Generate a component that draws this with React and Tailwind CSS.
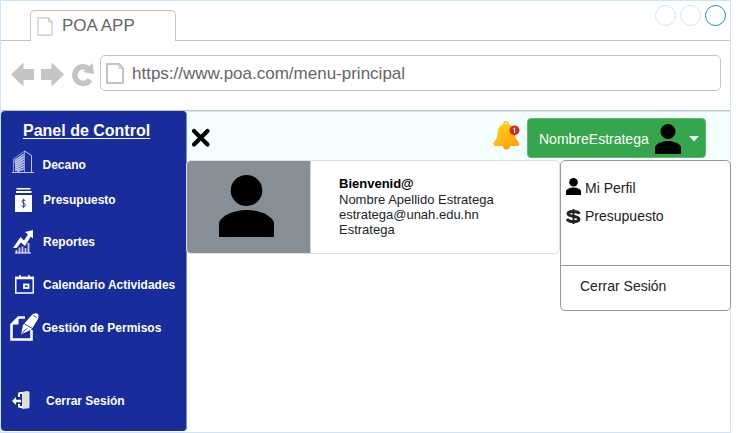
import React from "react";

function PageIcon({ className, weight }) {
  return (
    <svg className={className} viewBox="0 0 18 21" preserveAspectRatio="none" fill="none" stroke="#c4c4c4" strokeWidth={weight}>
      <path d="M1 1H13L17 5.500V20H1Z" />
      <path d="M13 1V5.500H17" strokeWidth="1" />
    </svg>
  );
}

function Person({ className }) {
  return (
    <svg className={className} viewBox="0 0 54 62" preserveAspectRatio="none" fill="#000">
      <circle cx="27" cy="15.500" r="15.500" />
      <path d="M0 62V47.500C3 40 15 35 27 35S51 40 54 47.500V62Z" />
    </svg>
  );
}

function BuildingIcon() {
  return (
    <svg className="h-6 w-[22px]" viewBox="0 0 22 24" fill="none" stroke="#c2c9ec">
      <path d="M0 22.500H22" strokeWidth="1" />
      <path d="M1.500 22V9L12.500 1V22" strokeWidth=".7" />
      <path d="M12.500 1L19.500 5.500V22" strokeWidth="1" />
      <path d="M2.500 10.500L12 4M2.500 12.500L12 6.500M3 14.500L12 9M3 16.500L12 11.500M3 18.500L12 14M3 20.500L12 16.500M5 21.500L12 19" strokeWidth="1.500" />
    </svg>
  );
}

function BudgetIcon() {
  return (
    <svg className="h-6 w-[17px]" viewBox="0 0 17 24" fill="#fff">
      <rect x="1.500" y="0" width="14" height="1.500" />
      <rect x="1" y="3" width="15.500" height="2" />
      <rect y="7" width="17" height="17" />
      <path d="M10.300 13C9.800 11.600 7 11.700 7 13.300C7 15.200 10.300 14.900 10.300 17.200C10.300 19.100 7.200 19.200 6.800 17.500M8.600 10.700V20.200" fill="none" stroke="#182c9c" strokeWidth=".9" />
    </svg>
  );
}

function ReportIcon() {
  return (
    <svg className="h-6 w-5" viewBox="0 0 20 24" fill="#fff">
      <path d="M0 18L7.500 7L11 10.500L15 4.500L12 2L20 0V8.500L17.800 6.500L12 16L8 12.500L3.500 18Z" />
      <path d="M3.500 20V23M6.500 17.500V23M9.500 16.500V23M12.500 18V23M15.500 13V23" stroke="#c7cdec" strokeWidth="1.800" />
      <path d="M2 22.600H18V23.500H2Z" />
    </svg>
  );
}

function CalendarIcon() {
  return (
    <svg className="h-[19px] w-[19px]" viewBox="0 0 19 19" fill="none" stroke="#fff">
      <rect x=".75" y="2.500" width="17.500" height="15.500" strokeWidth="1.500" />
      <path d="M0 3H19" strokeWidth="2.500" />
      <path d="M5 0V3M14 0V3" strokeWidth="1.500" />
      <rect x="9" y="9.500" width="4.500" height="3.500" strokeWidth="1.800" />
    </svg>
  );
}

function PermissionIcon() {
  return (
    <svg className="h-7 w-[29px]" viewBox="0 0 29 28" fill="none">
      <path d="M15 4.500H8.500L1.500 11.500V26.500H21.500V17" stroke="#fff" strokeWidth="2.600" />
      <path d="M8.500 3.500V11.500H.5Z" fill="#fff" />
      <path d="M11 21.500L13 12L20.500 3.500C23 .500 26-.500 28 1C29.500 3 28 6 26.500 8.500L21.500 16.500Z" fill="#fff" />
      <path d="M14.500 11L22.500 15.500M11.500 21L16.500 15.500M23.500 2.500L26.500 4.500" stroke="#182c9c" strokeWidth=".9" />
    </svg>
  );
}

function ExitIcon() {
  return (
    <svg className="h-[18px] w-[18px]" viewBox="0 0 18 18" fill="#dedede">
      <path d="M10 1L15 0C17 0 17.500 .8 17.500 2V15C17.500 17 17 17.500 15 17.500L10 18Z" />
      <path d="M10.500 1H8Q6 1 6 3V6H8V3H10.500ZM10.500 17H8Q6 17 6 15V13H8V15H10.500Z" fill="#fff" />
      <path d="M0 10L4 6V8.800H9V11.200H4V14Z" fill="#fff" />
    </svg>
  );
}

function SideItem({ icon, label, row, iconBox }) {
  return (
    <li className={`flex items-center ${row}`}>
      <span className={`flex shrink-0 ${iconBox}`}>{icon}</span>
      <span className="pt-px text-[12px] leading-4 font-bold whitespace-nowrap text-white">{label}</span>
    </li>
  );
}

function Sidebar() {
  return (
    <nav className="h-80 w-[186px] shrink-0 overflow-hidden rounded-[4px] border-r border-[#7a8cc8] bg-[#182c9c]">
      <h1 className="h-[35px] pt-[8px] pl-[22px] text-[16px] leading-6 font-bold whitespace-nowrap text-white underline underline-offset-2">Panel de Control</h1>
      <ul>
        <SideItem row="h-9" iconBox="w-[41.500px] pl-[11px] -mt-[5px]" label="Decano" icon={<BuildingIcon />} />
        <SideItem row="h-[35px]" iconBox="w-[42px] pl-[14px]" label="Presupuesto" icon={<BudgetIcon />} />
        <SideItem row="h-[49px]" iconBox="w-[42px] pl-3" label="Reportes" icon={<ReportIcon />} />
        <SideItem row="h-9" iconBox="w-[42px] pl-[14px]" label="Calendario Actividades" icon={<CalendarIcon />} />
        <SideItem row="h-[50px]" iconBox="w-[41px] pl-[9px]" label="Gestión de Permisos" icon={<PermissionIcon />} />
        <SideItem row="mt-9 h-6" iconBox="w-[45px] pl-[11px]" label="Cerrar Sesión" icon={<ExitIcon />} />
      </ul>
    </nav>
  );
}

function BrowserChrome() {
  return (
    <header>
      <div className="flex h-10 items-end">
        <div className="h-10 w-[29px] border-b border-[#c4c4c4]" />
        <div className="flex h-[31px] w-[146px] shrink-0 rounded-t-[5px] border-x border-t border-[#c4c4c4] pl-[6px]">
          <PageIcon className="mt-[6px] h-[19px] w-4" weight="1.200" />
          <span className="ml-[9px] text-[17px] leading-[30px] whitespace-nowrap text-[#666]">POA APP</span>
        </div>
        <div className="flex h-10 grow justify-end gap-1 border-b border-[#c4c4c4] pt-1 pr-1">
          <span className="size-[21px] rounded-full border border-[#cce5ff]" />
          <span className="size-[21px] rounded-full border border-[#cce5ff]" />
          <span className="size-[21px] rounded-full border border-[#1e88e5]" />
        </div>
      </div>
      <div className="flex h-[70px] border-b border-[#c4c4c4] pt-[14px] pr-[9px]">
        <svg className="mt-[6px] h-[26px] w-[99px] shrink-0" viewBox="1 61 99 26" fill="#c4c4c4">
          <path d="M11 74.500L23.500 62.500V69H34V80H23.500V86.500Z" />
          <path d="M64 74.500L51.500 62.500V69H41V80H51.500V86.500Z" />
          <path d="M90 79.700A8.300 8.300 0 1 1 88.500 68.800" fill="none" stroke="#c4c4c4" strokeWidth="5.500" />
          <path d="M92.500 63L94 74L83 72Z" />
        </svg>
        <div className="flex h-9 grow rounded-[5px] border border-[#c4c4c4] pl-[5px]">
          <PageIcon className="mt-[7px] h-[21px] w-[18px]" weight="2" />
          <span className="ml-2 text-[17px] leading-[35px] text-[#666]">https://www.poa.com/menu-principal</span>
        </div>
      </div>
    </header>
  );
}

function Bell() {
  return (
    <svg className="mt-[9px] ml-[282px] h-[29px] w-[28px] shrink-0" viewBox="0 0 28 29">
      <defs>
        <linearGradient id="bell" x1="0" y1="0" x2="1" y2="1">
          <stop offset="0" stopColor="#ffd322" />
          <stop offset="1" stopColor="#ff9d08" />
        </linearGradient>
      </defs>
      <circle cx="13" cy="3" r="2" fill="none" stroke="#ffb810" strokeWidth="1.500" />
      <circle cx="13.500" cy="25" r="3.500" fill="#f5a800" />
      <path d="M13 3C7 3 4.500 7 4.500 12C4.500 18 2 19 .5 22Q0 24.500 2 25H24.500Q27 24.500 26 22C24.500 19 22 18 22 12C22 7 19 3 13 3Z" fill="url(#bell)" />
      <circle cx="21.500" cy="9.300" r="4.900" fill="#cc2e16" />
      <path d="M20.300 8L21.600 6.800V12" fill="none" stroke="#fff" strokeWidth="1" />
    </svg>
  );
}

function TopBar() {
  return (
    <div className="flex h-[49px] border-t border-[#cce5ff] bg-[#f5feff]">
      <svg className="mt-[16px] ml-[4px] size-[20px] shrink-0" viewBox="0 0 20 20" stroke="#000" strokeWidth="4.200" strokeLinecap="round">
        <path d="M3 3L16.500 16.500M16.500 3L3 16.500" />
      </svg>
      <Bell />
      <button className="mt-[6px] ml-[6px] flex h-10 w-[179px] shrink-0 items-start rounded-[4px] border border-[#5cba70] bg-[#35a64b] pl-[11px] text-left">
        <span className="w-[116px] text-[14px] leading-[40px] text-white">NombreEstratega</span>
        <Person className="mt-[5px] h-[30px] w-[26px]" />
        <svg className="mt-[17px] ml-[8px] h-[6px] w-[10px]" viewBox="0 0 10 6"><path d="M0 0H10L5 5.500Z" fill="#fff" /></svg>
      </button>
    </div>
  );
}

function WelcomeCard() {
  return (
    <section className="flex h-[94px] w-[374px] shrink-0 overflow-hidden rounded-[5px] border border-[#dedfe1] bg-white">
      <div className="w-[124px] shrink-0 border-r border-[#d0d3d5] bg-[#868e96] pt-[14px] pl-8">
        <Person className="h-[62px] w-[55px]" />
      </div>
      <div className="pt-[15px] pl-7 text-[13px] leading-[15px] whitespace-nowrap text-[#212529]">
        <p className="pb-px font-bold text-black">Bienvenid@</p>
        <p>Nombre Apellido Estratega</p>
        <p>estratega@unah.edu.hn</p>
        <p>Estratega</p>
      </div>
    </section>
  );
}

function ProfileMenu() {
  return (
    <div className="h-[151px] w-[171px] shrink-0 rounded-[5px] border border-[#999] bg-white text-[14px] leading-4 text-[#222]">
      <div className="h-[105px] border-b border-[#999] pl-[5px]">
        <div className="flex h-[38px] items-end">
          <Person className="mb-[4px] h-[17px] w-[15px]" />
          <span className="mb-[3px] ml-1">Mi Perfil</span>
        </div>
        <div className="flex h-7 items-center">
          <svg className="mt-[6px] h-[15px] w-[15px]" viewBox="0 0 15 15" preserveAspectRatio="none" fill="none" stroke="#222">
            <path d="M13.500 4.800C12 2 2 1.500 2 4.800C2 8 13 6.500 13 10.200C13 13.500 3 13.500 1 10" strokeWidth="3" />
            <path d="M7.500 0V15" strokeWidth="1.800" />
          </svg>
          <span className="mt-[6px] ml-1">Presupuesto</span>
        </div>
      </div>
      <div className="pt-[12px] pl-[19px]">Cerrar Sesión</div>
    </div>
  );
}

export default function App() {
  return (
    <div className="h-[433px] w-[736px] overflow-hidden bg-white font-['Liberation_Sans',Arial,sans-serif]">
      <div className="h-[433px] w-[731px] border border-[#cce5ff] bg-white">
        <BrowserChrome />
        <main className="flex h-[321px]">
          <Sidebar />
          <div className="w-[543px] shrink-0">
            <TopBar />
            <div className="-ml-px flex">
              <WelcomeCard />
              <ProfileMenu />
            </div>
          </div>
        </main>
      </div>
    </div>
  );
}
